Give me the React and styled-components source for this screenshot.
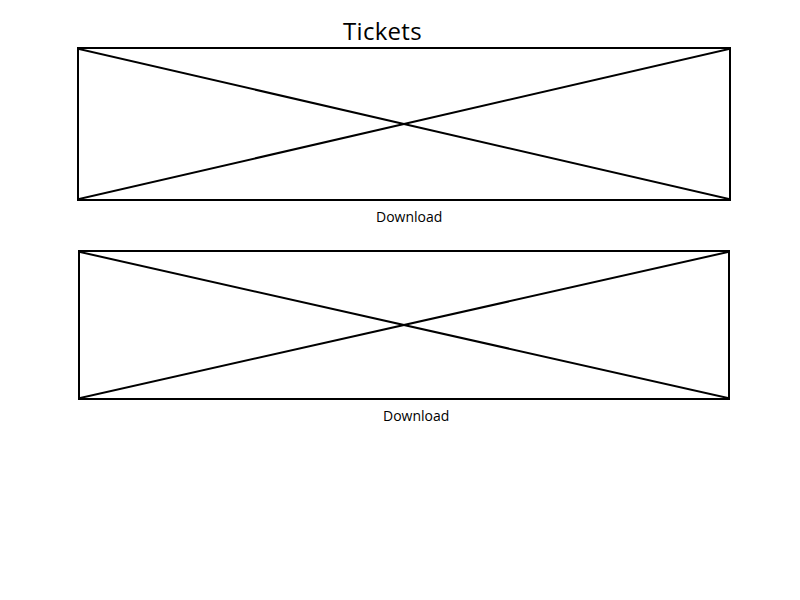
import React from 'react'
import styled, {createGlobalStyle} from 'styled-components'

const Global=createGlobalStyle`
body{
    margin:0;
    background:#ffffff;
    font-family:"Open Sans","Liberation Sans",sans-serif;
    color:#000000;
}
`

const Page=styled.div`
width:800px;
height:600px;
box-sizing:border-box;
padding:17px 0 0 0;
display:flex;
flex-direction:column;
`

const Title=styled.h1`
margin:0 0 2px 343px;
font-size:24px;
line-height:28px;
font-weight:normal;
letter-spacing:0.3px;
`

const Ticket=styled.div`
display:flex;
flex-direction:column;
margin-left:${props=>props.left||'77px'};
margin-bottom:${props=>props.gap||'0px'};
`

const Frame=styled.div`
width:${props=>props.width};
height:${props=>props.height};
box-sizing:border-box;
border:2px solid #000000;
`

const Cross=styled.svg`
display:block;
width:100%;
height:100%;
`

const Download=styled.p`
margin:${props=>props.top||'5px'} 0 0 ${props=>props.left};
font-size:14px;
line-height:18px;
cursor:pointer;
`

const Placeholder=({width,height})=>{
    return <Frame width={width} height={height}>
        <Cross viewBox="0 0 100 100" preserveAspectRatio="none">
            <line x1="0" y1="0" x2="100" y2="100" stroke="#000" strokeWidth="2" vectorEffect="non-scaling-stroke"/>
            <line x1="0" y1="100" x2="100" y2="0" stroke="#000" strokeWidth="2" vectorEffect="non-scaling-stroke"/>
        </Cross>
    </Frame>
}

export default function App(){
    return <>
        <Global/>
        <Page>
            <Title>Tickets</Title>
            <Ticket left="77px" gap="24px">
                <Placeholder width="654px" height="154px"/>
                <Download left="299px" top="7px">Download</Download>
            </Ticket>
            <Ticket left="78px">
                <Placeholder width="652px" height="150px"/>
                <Download left="305px" top="7px">Download</Download>
            </Ticket>
        </Page>
    </>
}
